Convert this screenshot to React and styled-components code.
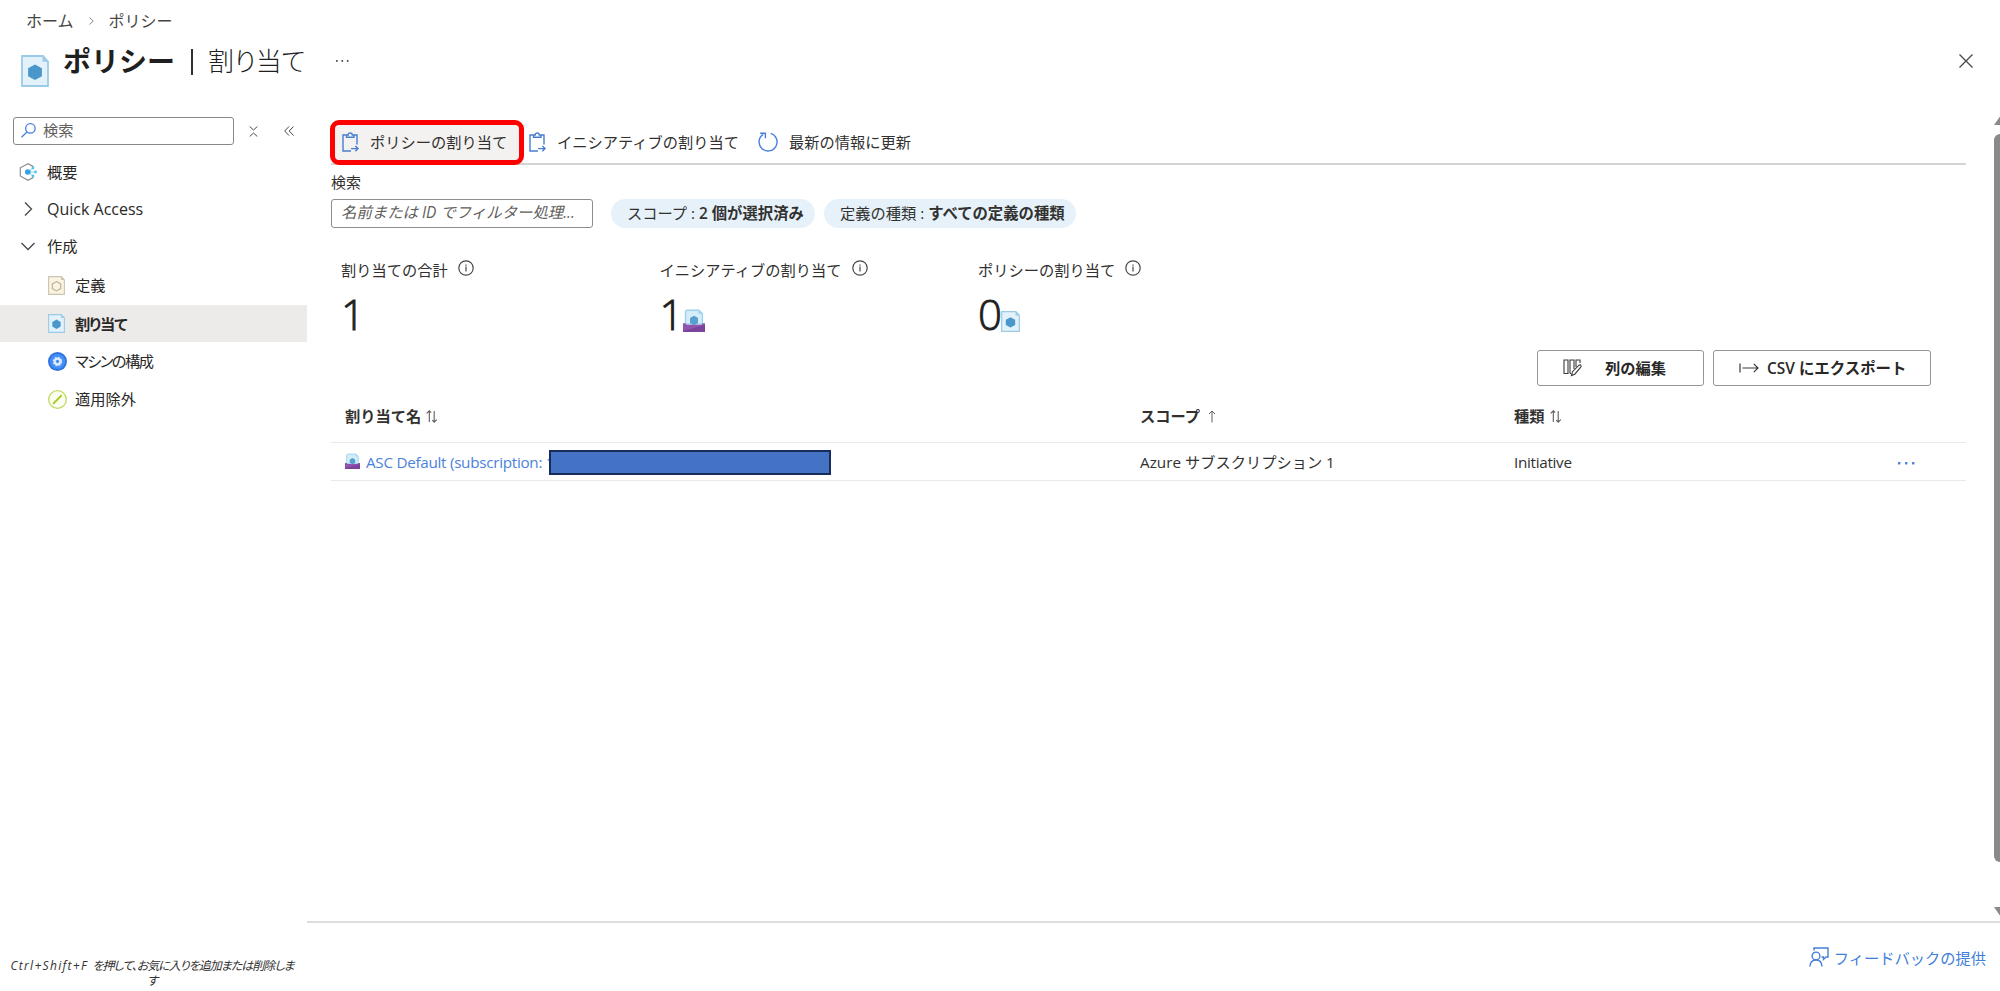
import React from 'react';
import styled, { createGlobalStyle } from 'styled-components';

const GlobalStyle = createGlobalStyle`
  * { box-sizing: border-box; }
  body {
    margin: 0;
    background: #fff;
    color: #323130;
    font-family: "Open Sans", "Noto Sans CJK JP", sans-serif;
    font-size: 15.25px;
    overflow: hidden;
  }
  svg { display: block; flex: none; overflow: visible; }
`;

const Text = styled.span`
  display: block;
  white-space: pre;
  line-height: 20px;
  font-size: ${p => p.$size || 15.25}px;
  font-weight: ${p => p.$weight || 400};
  letter-spacing: ${p => p.$track || 0}px;
  color: ${p => p.$color || 'inherit'};
  font-feature-settings: ${p => (p.$tight ? '"palt"' : 'normal')};
`;

const Page = styled.div`
  width: 2000px;
  height: 991px;
  display: flex;
  flex-direction: column;
`;
const Breadcrumb = styled.nav`
  height: 42px;
  padding-left: 26px;
  display: flex;
  align-items: center;
  gap: 15px;
  color: #484644;
`;
const TitleBar = styled.header`
  height: 62px;
  padding: 0 27px 0 21px;
  display: flex;
  align-items: flex-start;
`;
const TitleIcon = styled.div`
  margin-top: 13px;
  width: 42px;
`;
const Title = styled.h1`
  margin: 0;
  width: 273px;
  height: 38px;
  display: flex;
  align-items: center;
  color: #1f1f1f;
`;
const TitleDivider = styled.span`
  width: 2px;
  height: 26px;
  margin: 2px 15px 0 16px;
  background: #323130;
`;
const TitleEnd = styled.div`
  flex: 1;
  height: 38px;
  display: flex;
  align-items: center;
  justify-content: space-between;
`;
const Body = styled.div`
  flex: 1;
  display: flex;
`;
const Sidebar = styled.aside`
  width: 307px;
  display: flex;
  flex-direction: column;
  padding-top: 13px;
`;
const SideTools = styled.div`
  display: flex;
  align-items: center;
  height: 28px;
  padding-left: 13px;
`;
const SideSearch = styled.div`
  width: 221px;
  height: 28px;
  border: 1px solid #8a8886;
  border-radius: 3px;
  display: flex;
  align-items: center;
  gap: 7px;
  padding: 0 0 2px 7px;
  color: #605e5c;
`;
const SideToggle = styled.div`
  margin-left: ${p => p.$gap}px;
`;
const Menu = styled.ul`
  list-style: none;
  margin: 8px 0 0;
  padding: 0;
`;
const MenuItem = styled.li`
  height: ${p => p.$h || 37.8}px;
  padding-left: ${p => (p.$nested ? 47 : 19)}px;
  display: flex;
  align-items: center;
  color: #292827;
  background: ${p => (p.$active ? '#edebe9' : 'transparent')};
`;
const MenuIcon = styled.span`
  width: 28px;
  display: flex;
  padding-left: ${p => (p.$nested ? 1 : 0)}px;
  justify-content: flex-start;
`;
const SideHint = styled.p`
  margin: auto 0 3px;
  text-align: center;
  font-size: 12px;
  line-height: 15px;
  font-style: italic;
  font-feature-settings: "palt";
  color: #323130;
`;
const HintLine = styled.span`
  display: block;
  white-space: nowrap;
  letter-spacing: -1px;
  padding-right: 3px;
`;
const HintKeys = styled.span`
  letter-spacing: 1.3px;
`;

const Main = styled.main`
  flex: 1;
  display: flex;
  flex-direction: column;
`;
const Blade = styled.div`
  height: 819px;
  display: flex;
  border-bottom: 2px solid #dfdedd;
`;
const Content = styled.section`
  width: 1659px;
  padding: 16px 0 0 24px;
`;
const Toolbar = styled.div`
  height: 45px;
  display: flex;
  align-items: center;
  border-bottom: 2px solid #d6d4d2;
`;
const Command = styled.button`
  display: flex;
  align-items: center;
  gap: 11px;
  height: 44px;
  padding: 0 0 0 ${p => p.$pad}px;
  border: 0;
  background: none;
  font: inherit;
  color: #323130;
`;
const HighlightedCommand = styled(Command)`
  position: relative;
  width: 194px;
  height: 45px;
  margin: 2px 0 0 -1px;
  padding-bottom: 2px;
  border: 5px solid #fe0000;
  border-radius: 9px;
  background: #f3f2f1;
`;
const FilterLabel = styled.div`
  height: 34px;
  padding-top: 7px;
`;
const Filters = styled.div`
  height: 29px;
  display: flex;
  align-items: center;
`;
const FilterInput = styled.div`
  width: 262px;
  height: 29px;
  margin-right: 18px;
  padding: 0 0 1px 9px;
  border: 1.5px solid #8f8d8b;
  border-radius: 3px;
  display: flex;
  align-items: center;
  font-style: italic;
  color: #605e5c;
`;
const Pill = styled.div`
  width: ${p => p.$w}px;
  height: 29px;
  margin-right: 9px;
  padding: 0 0 1px 16px;
  border-radius: 15px;
  background: #e6f1fa;
  display: flex;
  align-items: center;
`;
const Stats = styled.div`
  display: grid;
  grid-template-columns: 318.5px 318.5px 1fr;
  padding: 32px 0 0 10px;
  height: 122px;
`;
const StatLabel = styled.div`
  display: flex;
  height: 20px;
  gap: 10px;
`;
const StatValue = styled.div`
  display: flex;
  align-items: flex-end;
  height: 52px;
`;
const StatNumber = styled.span`
  display: block;
  width: 23px;
  font-size: 42px;
  line-height: 34px;
  height: 35px;
  font-weight: 300;
  letter-spacing: -1px;
  -webkit-text-stroke: 0.9px #1f1f1f;
  color: #1f1f1f;
`;
const Actions = styled.div`
  display: flex;
  justify-content: flex-end;
  gap: 9px;
  padding-right: 35px;
  height: 36px;
`;
const ActionButton = styled.button`
  width: ${p => p.$w}px;
  height: 36px;
  padding: 0 0 1px 25px;
  display: flex;
  align-items: center;
  gap: ${p => p.$gap}px;
  border: 1.5px solid #979593;
  border-radius: 3px;
  background: #fff;
  color: #292827;
  font: inherit;
`;
const Row = styled.div`
  display: grid;
  grid-template-columns: 795px 374px 1fr 68px;
  align-items: center;
  height: ${p => p.$h}px;
  padding: ${p => p.$pt || 0}px 0 0 14px;
  border-bottom: 1px solid #ebe9e7;
`;
const Cell = styled.div`
  display: flex;
  align-items: center;
  gap: ${p => p.$gap || 5}px;
  padding-top: ${p => p.$pt || 0}px;
`;
const AssignmentName = styled.div`
  display: flex;
  align-items: center;
  margin-left: 1px;
`;
const Redaction = styled.span`
  position: relative;
  width: 282px;
  height: 25px;
  margin: 2px 0 0 -5px;
  border: 2px solid #172c58;
  background: #4472c4;
`;
const ScrollTrack = styled.div`
  width: 34px;
  padding: 12px 0 4px 28px;
  display: flex;
  flex-direction: column;
  overflow: hidden;
`;
const ScrollThumb = styled.div`
  width: 14px;
  height: 728px;
  margin: 8px 0 44px;
  border-radius: 6px;
  background: #8a8a8a;
`;
const Footer = styled.footer`
  flex: 1;
  display: flex;
  justify-content: flex-end;
  align-items: flex-start;
  gap: 5px;
  padding: 24px 14px 0 0;
  color: #4180da;
`;
const FooterLabel = styled(Text)`
  margin-top: 1px;
`;

const PolicyDoc = ({ w = 18, h = 20, fill = '#e3f1fa', line = '#9bcbe6', hex = '#4a97cb', hollow }) => (
  <svg width={w} height={h} viewBox="0 0 28 32" preserveAspectRatio="none">
    <path d="M1 1H22L27 6.5V31H1Z" fill={fill} stroke={line} strokeWidth="1.8" />
    <path d="M21.5 1L27 6.8H21.5Z" fill={line} />
    <path
      d="M14 9.4L20.9 13.3V21.2L14 25.1L7.1 21.2V13.3Z"
      fill={hollow ? 'none' : hex}
      stroke={hollow ? hex : 'none'}
      strokeWidth="2"
    />
  </svg>
);
const Initiative = ({ s = 22 }) => (
  <svg width={s} height={s} viewBox="0 0 22 22">
    <path d="M2.5 14V2.2Q2.5 .2 4.4 .2H15.8L19.4 3.6V14H2.5Z" fill="#d5edf9" stroke="#9bd3ee" strokeWidth="1.4" />
    <path d="M15.5 .2L19.4 3.8H15.5Z" fill="#9bd3ee" />
    <path d="M11 5.8L15 8V13L11 15.2L7 13V8Z" fill="#569fce" />
    <path d="M0 13.2H2.2L3.6 14.8H18.4L19.8 13.2H22V22H0Z" fill="#9154ad" />
    <path d="M0 21L22 15V22H0Z" fill="#7b4399" />
  </svg>
);
const Clipboard = () => (
  <svg width="17" height="20" viewBox="0 0 17 20" fill="none" stroke="#477ed0" strokeWidth="1.4">
    <path d="M4.5 3H1V19H9M12 3H15V12.5M4.5 5.3V3H6.2Q6.2 1 8.2 1T10.3 3H12V5.3Z" />
    <path d="M9 16.6H16M13.4 14L16 16.6L13.4 19.2" />
  </svg>
);
const Refresh = () => (
  <svg width="20" height="20" viewBox="0 0 20 20" fill="none" stroke="#477ee0" strokeWidth="1.4">
    <path d="M12.8 1.4A9 9 0 1 1 5.2 2.4" />
    <path d="M2.2 1.2H7.4V6.2" />
  </svg>
);
const Info = () => (
  <svg width="16" height="16" viewBox="0 0 16 16" fill="none" stroke="#494745" strokeWidth="1.2">
    <circle cx="8" cy="8" r="7.2" />
    <path d="M8 6.6V11.4M8 4.5V5.7" />
  </svg>
);
const Search = () => (
  <svg width="15" height="15" viewBox="0 0 15 15" fill="none" stroke="#4a7fe0" strokeWidth="1.3">
    <circle cx="9.4" cy="5.4" r="4.7" />
    <path d="M6 9L.5 14.3" />
  </svg>
);
const Overview = () => (
  <svg width="18" height="18" viewBox="0 0 18 18" fill="none">
    <path d="M14.5 3.6L9 .7L1.3 4.8V13L9 17.3L14.5 14.4" stroke="#8e8e8e" strokeWidth="1.2" />
    <path d="M9 9H16M10 8L14 4.8M10 10L14 13.2" stroke="#8bd5f2" />
    <circle cx="8.8" cy="9" r="2.8" fill="#2fa4e0" />
    <circle cx="14" cy="5" r="1.4" fill="#50c4ee" />
    <circle cx="16.4" cy="9" r="1.4" fill="#50c4ee" />
    <circle cx="14" cy="13" r="1.4" fill="#50c4ee" />
  </svg>
);
const Chevron = ({ w, h, d, color = '#494745', sw = 1.3 }) => (
  <svg width={w} height={h} fill="none" stroke={color} strokeWidth={sw}>
    <path d={d} />
  </svg>
);
const Machine = () => (
  <svg width="19" height="19" viewBox="0 0 19 19" fill="none">
    <circle cx="9.5" cy="9.5" r="9.5" fill="#2f74dc" />
    <circle cx="9.5" cy="9.5" r="7.6" fill="#4690fa" />
    <circle cx="9.5" cy="9.5" r="4" fill="#a7cdfd" />
    <circle cx="9.5" cy="9.5" r="3.9" stroke="#e5f1ff" strokeWidth="1.5" strokeDasharray="1.7 1.36" />
    <circle cx="9.5" cy="9.5" r="2.7" stroke="#e5f1ff" strokeWidth="1.4" />
    <circle cx="9.5" cy="9.5" r="1.4" fill="#3d84ec" />
  </svg>
);
const Exempt = () => (
  <svg width="19" height="19" viewBox="0 0 19 19" fill="none">
    <circle cx="9.5" cy="9.5" r="8.8" fill="#fbfdf2" stroke="#bfdb60" strokeWidth="1.3" />
    <path d="M5.7 13.3L13.2 5.8" stroke="#a8cd28" strokeWidth="2" strokeLinecap="round" />
  </svg>
);
const Columns = () => (
  <svg width="19" height="18" viewBox="0 0 19 18" fill="none" stroke="#3b3a39" strokeWidth="1.1">
    <path d="M1 1H5V14.5H1ZM7 14.5V1H11V10M7 14.5H8M13 8V1H17V4" />
    <path d="M8.5 16.5L9.5 12.7L16 6.2Q17.5 5.3 18 6.5Q18.5 7.5 17.7 8.2L11.8 15.2Z" />
  </svg>
);
const Export = () => (
  <svg width="20" height="10" viewBox="0 0 20 10" fill="none" stroke="#3b3a39" strokeWidth="1.2">
    <path d="M1 .5V9.5M3.5 5H19M14.8 .8L19 5L14.8 9.2" />
  </svg>
);
const Sort = () => (
  <svg width="12" height="13" viewBox="0 0 12 13" fill="none" stroke="#605e5c" strokeWidth="1.1">
    <path d="M3.3 12V1M.7 3.4L3.3 .8L5.2 2.7M8.2 1V12M6.3 10.2L8.2 12.2L10.8 9.6" />
  </svg>
);
const SortUp = () => (
  <svg width="8" height="13" viewBox="0 0 8 13" fill="none" stroke="#605e5c">
    <path d="M4 12.5V1M1 4L4 1L7 4" />
  </svg>
);
const Dots = ({ color, gap, s }) => (
  <svg width={gap * 2 + s} height={s} fill={color}>
    {[0, 1, 2].map(i => <rect key={i} x={i * gap} width={s} height={s} rx=".6" />)}
  </svg>
);
const Feedback = () => (
  <svg width="20" height="20" viewBox="0 0 20 20" fill="none" stroke="#477ed8" strokeWidth="1.4">
    <path d="M5 3.5V1H19V10H17L14.5 12.4V10H12.5" />
    <circle cx="7" cy="9" r="3.9" />
    <path d="M.8 19.5Q1.4 13 7 13T13 19.5" />
  </svg>
);

const menu = [
  { label: '概要', icon: <Overview />, h: 38 },
  { label: 'Quick Access', icon: <Chevron w={18} h={14} d="M6 .5L12.5 7L6 13.5" />, h: 35, size: 16 },
  { label: '作成', icon: <Chevron w={18} h={9} d="M2.5 1L9 7.5L15.5 1" />, h: 40 },
  { label: '定義', nested: true, h: 38.7, icon: <PolicyDoc w={17} h={19} fill="#fcf4de" line="#c9c4b6" hex="#bdb49d" hollow /> },
  { label: '割り当て', nested: true, active: true, icon: <PolicyDoc w={17} h={19} />, weight: 700, track: -1.1 },
  { label: 'マシンの構成', nested: true, icon: <Machine />, track: -1.5 },
  { label: '適用除外', nested: true, icon: <Exempt /> },
];

const stats = [
  { label: '割り当ての合計', value: '1' },
  { label: 'イニシアティブの割り当て', value: '1', icon: <Initiative /> },
  { label: 'ポリシーの割り当て', value: '0', icon: <PolicyDoc w={19} h={21} /> },
];

export default function App() {
  return (
    <Page>
      <GlobalStyle />
      <Breadcrumb>
        <Text $size={16}>ホーム</Text>
        <Chevron w={5} h={8} d="M.5 .5L4.3 4L.5 7.5" color="#8a8886" sw={1} />
        <Text $size={16}>ポリシー</Text>
      </Breadcrumb>
      <TitleBar>
        <TitleIcon><PolicyDoc w={28} h={32} /></TitleIcon>
        <Title>
          <Text $size={28} $weight={700}>ポリシー</Text>
          <TitleDivider />
          <Text $size={26} $weight={300} $tight>割り当て</Text>
        </Title>
        <TitleEnd>
          <Dots color="#494745" gap={5.4} s={1.8} />
          <Chevron w={14} h={14} d="M.5 .5L13.5 13.5M13.5 .5L.5 13.5" />
        </TitleEnd>
      </TitleBar>
      <Body>
        <Sidebar>
          <SideTools>
            <SideSearch><Search /><Text>検索</Text></SideSearch>
            <SideToggle $gap={15}>
              <Chevron w={9} h={11} sw={1} d="M.7 .5L4.5 4L8.3 .5M.7 10.5L4.5 7L8.3 10.5" />
            </SideToggle>
            <SideToggle $gap={26}>
              <Chevron w={10} h={10} sw={1} d="M5 .5L.7 5L5 9.5M9.5 .5L5.2 5L9.5 9.5" />
            </SideToggle>
          </SideTools>
          <Menu>
            {menu.map(m => (
              <MenuItem key={m.label} $h={m.h} $nested={m.nested} $active={m.active}>
                <MenuIcon $nested={m.nested}>{m.icon}</MenuIcon>
                <Text $size={m.size} $weight={m.weight} $track={m.track} $tight={m.nested}>{m.label}</Text>
              </MenuItem>
            ))}
          </Menu>
          <SideHint>
            <HintLine><HintKeys>Ctrl+Shift+F </HintKeys> を押して、お気に入りを追加または削除しま</HintLine>
            <HintLine>す</HintLine>
          </SideHint>
        </Sidebar>
        <Main>
          <Blade>
            <Content>
              <Toolbar>
                <HighlightedCommand $pad={7}><Clipboard /><Text>ポリシーの割り当て</Text></HighlightedCommand>
                <Command $pad={5}><Clipboard /><Text>イニシアティブの割り当て</Text></Command>
                <Command $pad={19}><Refresh /><Text>最新の情報に更新</Text></Command>
              </Toolbar>
              <FilterLabel><Text $size={15}>検索</Text></FilterLabel>
              <Filters>
                <FilterInput><Text $size={15.4}>名前または ID でフィルター処理...</Text></FilterInput>
                <Pill $w={204}><Text>スコープ : </Text><Text $size={15.35} $weight={600}>2 個が選択済み</Text></Pill>
                <Pill $w={252}><Text>定義の種類 : </Text><Text $size={15.35} $weight={600}>すべての定義の種類</Text></Pill>
              </Filters>
              <Stats>
                {stats.map(s => (
                  <div key={s.label}>
                    <StatLabel><Text>{s.label}</Text><Info /></StatLabel>
                    <StatValue><StatNumber>{s.value}</StatNumber>{s.icon}</StatValue>
                  </div>
                ))}
              </Stats>
              <Actions>
                <ActionButton $w={167} $gap={23}><Columns /><Text $weight={600}>列の編集</Text></ActionButton>
                <ActionButton $w={218} $gap={8}><Export /><Text $size={15.45} $weight={600}>CSV にエクスポート</Text></ActionButton>
              </Actions>
              <Row $h={57} $pt={4}>
                <Cell><Text $weight={600}>割り当て名</Text><Sort /></Cell>
                <Cell $gap={8}><Text $weight={600}>スコープ</Text><SortUp /></Cell>
                <Cell><Text $weight={600}>種類</Text><Sort /></Cell>
              </Row>
              <Row $h={38}>
                <Cell>
                  <Initiative s={15} />
                  <AssignmentName>
                    <Text $track={-0.29} $color="#4a82dc">ASC Default (subscription: 1</Text>
                    <Redaction />
                  </AssignmentName>
                </Cell>
                <Cell><Text>Azure サブスクリプション 1</Text></Cell>
                <Cell><Text $track={-0.3}>Initiative</Text></Cell>
                <Cell $pt={4}><Dots color="#477ed8" gap={7} s={2.4} /></Cell>
              </Row>
            </Content>
            <ScrollTrack>
              <svg width="14" height="10" fill="#8a8a8a"><path d="M0 9L5.5 1.2Q7 0 8.5 1.2L14 9Z" /></svg>
              <ScrollThumb />
              <svg width="14" height="10" fill="#8a8a8a"><path d="M0 1L5.5 9Q7 10.5 8.5 9L14 1Z" /></svg>
            </ScrollTrack>
          </Blade>
          <Footer><Feedback /><FooterLabel>フィードバックの提供</FooterLabel></Footer>
        </Main>
      </Body>
    </Page>
  );
}
